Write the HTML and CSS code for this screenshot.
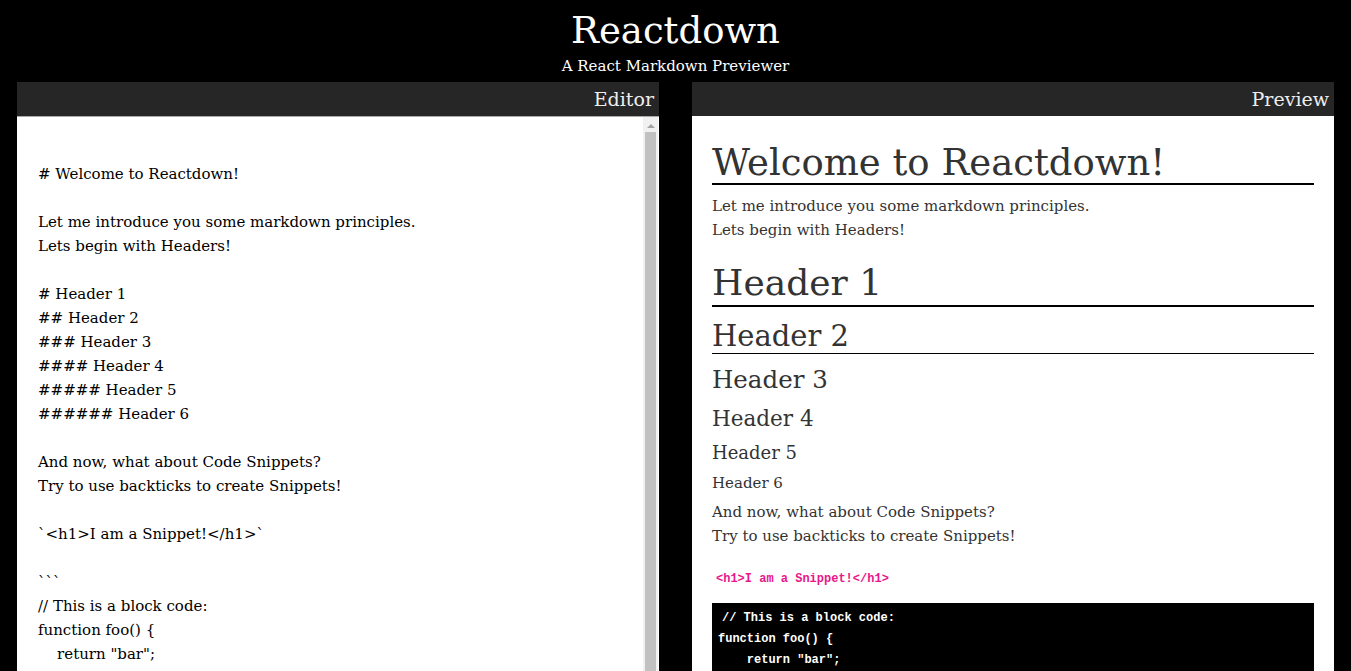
FILE: index.html
```html
<!DOCTYPE html>
<html lang="en">
<head>
<meta charset="utf-8">
<title>Reactdown</title>
<link rel="stylesheet" href="styles.css">
</head>
<body>
<header class="site-header">
  <h1 class="site-title">Reactdown</h1>
  <p class="site-subtitle">A React Markdown Previewer</p>
</header>
<main class="panels">
  <section class="panel panel-editor">
    <div class="panel-bar">Editor</div>
    <textarea class="editor" spellcheck="false">

# Welcome to Reactdown!

Let me introduce you some markdown principles.
Lets begin with Headers!

# Header 1
## Header 2
### Header 3
#### Header 4
##### Header 5
###### Header 6

And now, what about Code Snippets?
Try to use backticks to create Snippets!

&#96;&lt;h1&gt;I am a Snippet!&lt;/h1&gt;&#96;

&#96;&#96;&#96;
// This is a block code:
function foo() {
    return "bar";
}
&#96;&#96;&#96;

Now let's see some lists:

- First item
- Second item
  - Nested item
- Third item

1. One
2. Two
3. Three

&gt; Blockquotes are great too!

You can also write **bold text**,
_italic text_ and even [links](https://github.com).
</textarea>
    <div class="scrollbar" aria-hidden="true">
      <span class="scroll-arrow"></span>
      <span class="scroll-thumb"></span>
    </div>
  </section>
  <section class="panel">
    <div class="panel-bar">Preview</div>
    <article class="preview">
      <h1 class="md-h1 md-first">Welcome to Reactdown!</h1>
      <p class="md-p md-intro">Let me introduce you some markdown principles.<br>Lets begin with Headers!</p>
      <h1 class="md-h1 md-second">Header 1</h1>
      <h2 class="md-h2">Header 2</h2>
      <h3 class="md-h3">Header 3</h3>
      <h4 class="md-h4">Header 4</h4>
      <h5 class="md-h5">Header 5</h5>
      <h6 class="md-h6">Header 6</h6>
      <p class="md-p md-after">And now, what about Code Snippets?<br>Try to use backticks to create Snippets!</p>
      <p class="md-p md-snippet"><code class="md-code">&lt;h1&gt;I am a Snippet!&lt;/h1&gt;</code></p>
      <pre class="md-pre"><code class="md-code md-block">// This is a block code:
function foo() {
    return "bar";
}</code></pre>
    </article>
  </section>
</main>
</body>
</html>
```
FILE: styles.css
```css
html, body {
  margin: 0;
  padding: 0;
  height: 100%;
  overflow: hidden;
}

body {
  background: #000;
  font-family: "DejaVu Serif", "Liberation Serif", serif;
  color: #000;
}

.site-header {
  text-align: center;
  color: #fff;
}

.site-title {
  margin: 9px 0 0;
  font-size: 37px;
  line-height: 44px;
  font-weight: normal;
}

.site-subtitle {
  margin: 3px 0 0;
  font-size: 15px;
  line-height: 20px;
}

.panels {
  display: flex;
  gap: 33px;
  padding: 6px 17px 0;
}

.panel {
  position: relative;
  flex: 1 1 0;
  min-width: 0;
  display: flex;
  flex-direction: column;
  background: #fff;
  height: 1000px;
}

.panel-bar {
  background: #262626;
  color: #eee;
  height: 34px;
  line-height: 34px;
  font-size: 19px;
  text-align: right;
  padding-right: 5px;
}

.editor {
  display: block;
  box-sizing: border-box;
  width: 100%;
  height: 900px;
  margin: 0;
  border: none;
  border-top: 1px solid #a9a9a9;
  padding: 21px 20px 19px 21px;
  font-family: "DejaVu Serif", "Liberation Serif", serif;
  font-size: 15px;
  line-height: 24px;
  color: #000;
  background: #fff;
  resize: none;
  outline: none;
  overflow: hidden;
}

.scrollbar {
  position: absolute;
  top: 35px;
  right: 1px;
  bottom: 0;
  width: 15px;
  background: #f1f1f1;
}

.scroll-arrow {
  position: absolute;
  top: 7px;
  left: 4px;
  width: 0;
  height: 0;
  border-left: 4px solid transparent;
  border-right: 4px solid transparent;
  border-bottom: 4px solid #a3a3a3;
}

.scroll-thumb {
  position: absolute;
  top: 15px;
  left: 2px;
  right: 2px;
  bottom: 0;
  background: #c1c1c1;
}

.preview {
  padding: 0 20px 20px;
  color: #333;
}

.md-h1, .md-h2, .md-h3, .md-h4, .md-h5, .md-h6 {
  font-weight: normal;
  margin-bottom: 0;
}

.md-h1 {
  font-size: 37px;
  line-height: 40px;
  border-bottom: 2px solid #000;
}

.md-first {
  margin-top: 27px;
}

.md-second {
  font-size: 36px;
  margin-top: 21px;
  padding-bottom: 2px;
}

.md-h2 {
  margin-top: 13px;
  font-size: 29px;
  line-height: 32px;
  padding-bottom: 1px;
  border-bottom: 1px solid #000;
}

.md-h3 {
  margin-top: 12px;
  font-size: 24.5px;
  line-height: 28px;
}

.md-h4 {
  margin-top: 12px;
  font-size: 21.5px;
  line-height: 26px;
}

.md-h5 {
  margin-top: 10px;
  font-size: 18px;
  line-height: 22px;
}

.md-h6 {
  margin-top: 9px;
  font-size: 15px;
  line-height: 20px;
}

.md-p {
  margin: 0;
  font-size: 15px;
  line-height: 24px;
}

.md-intro {
  margin-top: 9px;
}

.md-after {
  margin-top: 7px;
}

.md-snippet {
  margin-top: 17px;
}

.md-code {
  font-family: "Liberation Mono", monospace;
  font-size: 12px;
  font-weight: bold;
  color: #e8178a;
  padding: 0 4px;
}

.md-pre {
  margin: 12px 0 0;
  padding: 5px 6px;
  background: #000;
  font-family: "Liberation Mono", monospace;
  font-size: 12px;
  line-height: 21px;
}

.md-block {
  color: #fff;
  padding: 0 0 0 4px;
}
```
